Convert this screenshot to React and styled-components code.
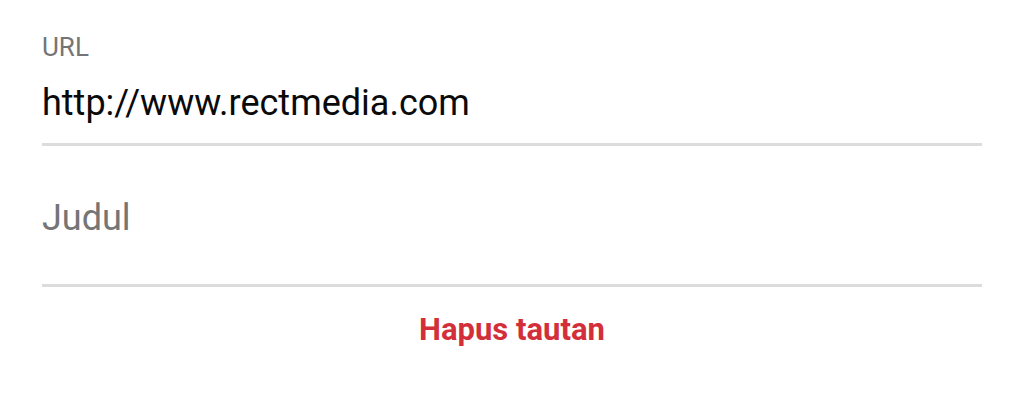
import React from 'react';
import styled, { createGlobalStyle } from 'styled-components';

const GlobalStyle = createGlobalStyle`
  html, body {
    margin: 0;
    padding: 0;
    background: #ffffff;
  }
  body {
    font-family: Roboto, "Noto Sans", "Liberation Sans", sans-serif;
  }
`;

const Sheet = styled.div`
  width: 1024px;
  height: 408px;
  box-sizing: border-box;
  padding: 34px 42px 0 42px;
  background: #ffffff;
  display: flex;
  flex-direction: column;
`;

const Field = styled.div`
  display: flex;
  flex-direction: column;
  padding-top: ${(p) => p.$top || 0}px;
  padding-bottom: ${(p) => p.$bottom || 0}px;
  border-bottom: 3px solid #dcdcdc;
`;

const FieldLabel = styled.label`
  font-size: 26px;
  line-height: 26px;
  color: #757575;
  margin-bottom: 22px;
`;

const FieldInput = styled.input`
  border: none;
  outline: none;
  padding: 0;
  margin: 0;
  background: transparent;
  font-family: inherit;
  font-size: 36px;
  height: 42px;
  line-height: 42px;
  color: #0a0a0a;

  &::placeholder {
    color: #757575;
    opacity: 1;
  }
`;

const RemoveButton = styled.button`
  align-self: center;
  margin-top: 25px;
  border: none;
  background: none;
  padding: 0;
  font-family: inherit;
  font-weight: 700;
  font-size: 31px;
  line-height: 36px;
  color: #d32f3a;
  cursor: pointer;
`;

export default function App() {
  return (
    <>
      <GlobalStyle />
      <Sheet>
        <Field $bottom={19}>
          <FieldLabel htmlFor="url">URL</FieldLabel>
          <FieldInput id="url" defaultValue="http://www.rectmedia.com" />
        </Field>
        <Field $top={51} $bottom={45}>
          <FieldInput id="judul" placeholder="Judul" />
        </Field>
        <RemoveButton type="button">Hapus tautan</RemoveButton>
      </Sheet>
    </>
  );
}
